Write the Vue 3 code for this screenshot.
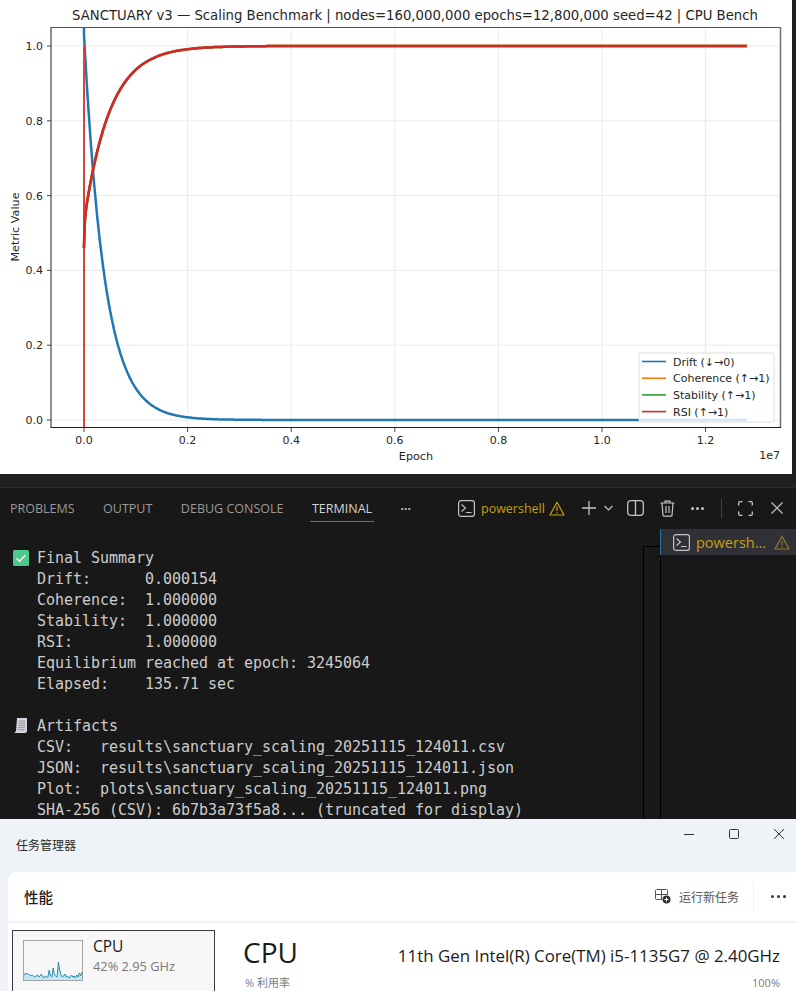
<script setup>
const X0 = 84, XU = 518, Y0 = 420, YU = 374, END = 1.28
const px = (t) => X0 + t * XU
const py = (v) => Y0 - v * YU

function series(fn, spike) {
  const pts = spike ? spike.map(([t, v]) => `${px(t).toFixed(1)},${py(v).toFixed(1)}`) : []
  for (let i = 0; i <= 400; i++) {
    const t = END * Math.pow(i / 400, 2.2)
    pts.push(`${px(t).toFixed(1)},${py(fn(t)).toFixed(1)}`)
  }
  return pts.join(' ')
}

const drift = series((t) => 1.03 * Math.exp(-t / 0.04) + 0.0002, [[0, 1.2]])
const rise = (t) => 1 - 0.47 * Math.exp(-t / 0.05) - 0.07 * Math.exp(-t / 0.0012)
const coherence = series(rise)
const stability = series(rise)
const rsi = series(rise)

const xTicks = [0, 0.2, 0.4, 0.6, 0.8, 1.0, 1.2]
const yTicks = [0, 0.2, 0.4, 0.6, 0.8, 1.0]

const legend = [
  { color: '#1f77b4', label: 'Drift (↓→0)' },
  { color: '#ff7f0e', label: 'Coherence (↑→1)' },
  { color: '#2ca02c', label: 'Stability (↑→1)' },
  { color: '#d62728', label: 'RSI (↑→1)' },
]

const summary = [
  'Drift:      0.000154',
  'Coherence:  1.000000',
  'Stability:  1.000000',
  'RSI:        1.000000',
  'Equilibrium reached at epoch: 3245064',
  'Elapsed:    135.71 sec',
]
const artifacts = [
  'CSV:   results\\sanctuary_scaling_20251115_124011.csv',
  'JSON:  results\\sanctuary_scaling_20251115_124011.json',
  'Plot:  plots\\sanctuary_scaling_20251115_124011.png',
  'SHA-256 (CSV): 6b7b3a73f5a8... (truncated for display)',
]

const cpu = [5,4,6,5,5,4,3,4,3,2,3,4,2,3,5,2,1,3,2,2,9,3,2,11,4,3,2,17,9,4,2,3,5,2,3,1,2,4,2,3,1,4,2,6,3,7]
const cpuStep = 59 / (cpu.length - 1)
const cpuLine = cpu.map((h, i) => `${(i * cpuStep).toFixed(1)},${40 - h - 1}`).join(' ')
const cpuArea = `0,40 ${cpuLine} 59,40`
</script>

<template>
  <div class="page">
    <section class="chart">
      <svg class="plot" width="792" height="474" viewBox="0 0 792 474">
        <text class="title" x="415" y="20" text-anchor="middle">SANCTUARY v3 — Scaling Benchmark | nodes=160,000,000 epochs=12,800,000 seed=42 | CPU Bench</text>

        <g class="grid">
          <line v-for="t in xTicks" :key="'gx' + t" :x1="px(t)" :x2="px(t)" y1="27" y2="427" />
          <line v-for="v in yTicks" :key="'gy' + v" x1="51" x2="781" :y1="py(v)" :y2="py(v)" />
        </g>

        <svg x="51" y="27" width="730" height="400" :viewBox="'51 27 730 400'">
          <polyline class="curve" :points="drift" stroke="#1f77b4" />
          <polyline class="curve" :points="coherence" stroke="#ff7f0e" />
          <polyline class="curve" :points="stability" stroke="#2ca02c" />
          <line class="spike" :x1="px(0)" :x2="px(0)" :y1="py(1)" :y2="py(-0.02)" />
          <polyline class="curve" :points="rsi" stroke="#d62728" />
        </svg>

        <line class="spine-top" x1="51" x2="781" y1="27.5" y2="27.5" />
        <line class="spine-left" x1="51" x2="51" y1="27" y2="428" />
        <line class="spine-right" x1="780.5" x2="780.5" y1="27" y2="428" />
        <line class="spine-bottom" x1="51" x2="781" y1="427.5" y2="427.5" />

        <g v-for="t in xTicks" :key="'tx' + t">
          <line class="tick" :x1="px(t)" :x2="px(t)" y1="428" y2="432" />
          <text class="ticklabel" :x="px(t)" y="444" text-anchor="middle">{{ t.toFixed(1) }}</text>
        </g>
        <g v-for="v in yTicks" :key="'ty' + v">
          <line class="tick" x1="47" x2="51" :y1="py(v)" :y2="py(v)" />
          <text class="ticklabel" x="43" :y="py(v) + 4" text-anchor="end">{{ v.toFixed(1) }}</text>
        </g>

        <text class="axislabel" x="416" y="460" text-anchor="middle">Epoch</text>
        <text class="ticklabel" x="780" y="459" text-anchor="end">1e7</text>
        <text class="axislabel" transform="translate(19 227) rotate(-90)" text-anchor="middle">Metric Value</text>

        <rect class="legend-box" x="639" y="353" width="135" height="69" rx="2" />
        <g v-for="(item, i) in legend" :key="item.label">
          <line :x1="642" :x2="666" :y1="361.5 + i * 16.7" :y2="361.5 + i * 16.7" :stroke="item.color" stroke-width="1.6" />
          <text class="legendlabel" x="673" :y="365.5 + i * 16.7">{{ item.label }}</text>
        </g>
      </svg>
    </section>

    <section class="panel">
      <div class="band"></div>
      <header class="tabs">
        <nav class="tablist">
          <span class="tab">PROBLEMS</span>
          <span class="tab">OUTPUT</span>
          <span class="tab">DEBUG CONSOLE</span>
          <span class="tab active">TERMINAL</span>
          <span class="more">···</span>
        </nav>
        <div class="actions">
          <svg class="ic-term" width="17" height="17" viewBox="0 0 17 17" fill="none" stroke="#c4c4c4" stroke-width="1.2">
            <rect x=".6" y=".6" width="15.8" height="15.8" rx="2.5" />
            <path d="M3.5 4.5l4 3.5-4 3.5M8 12.5h5.5" />
          </svg>
          <span class="ps">powershell</span>
          <svg class="ic-warn" width="16" height="15" viewBox="0 0 16 15" fill="none" stroke="#c69f12" stroke-width="1.2">
            <path d="M8 1.2L15 14H1z" stroke-linejoin="round" />
            <path d="M8 5.5v4.5M8 11.2v1.2" />
          </svg>
          <svg class="ic-plus" width="16" height="16" viewBox="0 0 16 16" stroke="#c4c4c4" stroke-width="1.3">
            <path d="M8 1v14M1 8h14" />
          </svg>
          <svg class="ic-chev" width="9" height="6" viewBox="0 0 9 6" fill="none" stroke="#c4c4c4" stroke-width="1.1">
            <path d="M.5 1l4 4 4-4" />
          </svg>
          <svg class="ic-split" width="17" height="16" viewBox="0 0 17 16" fill="none" stroke="#c4c4c4" stroke-width="1.3">
            <rect x=".7" y=".7" width="15.6" height="14.6" rx="3" />
            <path d="M8.5 1v14" />
          </svg>
          <svg class="ic-trash" width="15" height="17" viewBox="0 0 15 17" fill="none" stroke="#c4c4c4" stroke-width="1.2">
            <path d="M.5 3h14M5 3V1.2h5V3M2 3l1 12.2a1 1 0 0 0 1 1h7a1 1 0 0 0 1-1L13 3M6 6v7M9 6v7" />
          </svg>
          <span class="dots"><i></i><i></i><i></i></span>
          <span class="sep"></span>
          <svg class="ic-full" width="15" height="15" viewBox="0 0 15 15" fill="none" stroke="#c4c4c4" stroke-width="1.3">
            <path d="M.7 4.5V2A1.3 1.3 0 0 1 2 .7h2.5M10.5.7H13A1.3 1.3 0 0 1 14.3 2v2.5M14.3 10.5V13a1.3 1.3 0 0 1-1.3 1.3h-2.5M4.5 14.3H2A1.3 1.3 0 0 1 .7 13v-2.5" />
          </svg>
          <svg class="ic-close" width="12" height="12" viewBox="0 0 12 12" stroke="#c4c4c4" stroke-width="1.2">
            <path d="M.5.5l11 11M11.5.5l-11 11" />
          </svg>
        </div>
      </header>

      <div class="body">
        <div class="output">
          <div class="line">
            <svg class="emoji" width="16" height="16" viewBox="0 0 16 16">
              <rect width="16" height="16" rx="1.5" fill="#4ec98c" />
              <path d="M3.5 8.2l3 3 6-6.2" fill="none" stroke="#fff" stroke-width="1.4" />
            </svg>Final Summary
          </div>
          <div v-for="row in summary" :key="row" class="line">{{ row }}</div>
          <div class="line"> </div>
          <div class="line">
            <svg class="emoji" width="16" height="16" viewBox="0 0 16 16">
              <path d="M4 0h10v13a2 2 0 0 1-2 2H1.5A1.5 1.5 0 0 1 3 13.5z" fill="#d5d3de" />
              <path d="M5.5 3h6.5M5.5 5.2h6.5M5.5 7.4h6.5M5.2 9.6h6.5M5 11.8h6.5" stroke="#8b8a96" stroke-width=".9" />
            </svg>Artifacts
          </div>
          <div v-for="row in artifacts" :key="row" class="line">{{ row }}</div>
        </div>
        <div class="gutter"></div>
        <aside class="sidebar">
          <div class="session">
            <svg width="17" height="17" viewBox="0 0 17 17" fill="none" stroke="#c4c4c4" stroke-width="1.2">
              <rect x=".6" y=".6" width="15.8" height="15.8" rx="2.5" />
              <path d="M3.5 4.5l4 3.5-4 3.5M8 12.5h5.5" />
            </svg>
            <span class="session-name">powersh...</span>
            <svg width="16" height="15" viewBox="0 0 16 15" fill="none" stroke="#8f7d25" stroke-width="1.2">
              <path d="M8 1.2L15 14H1z" stroke-linejoin="round" />
              <path d="M8 5.5v4.5M8 11.2v1.2" />
            </svg>
          </div>
          <div class="sidebar-rest"></div>
        </aside>
      </div>
    </section>

    <section class="taskmgr">
      <header class="titlebar">
        <span class="apptitle">任务管理器</span>
        <div class="winctl">
          <svg width="10" height="10" viewBox="0 0 10 10" stroke="#333" stroke-width="1"><path d="M0 5.5h10" /></svg>
          <svg width="10" height="10" viewBox="0 0 10 10" fill="none" stroke="#333" stroke-width="1"><rect x=".5" y=".5" width="9" height="9" rx="1" /></svg>
          <svg width="10" height="10" viewBox="0 0 10 10" stroke="#333" stroke-width="1"><path d="M0 0l10 10M10 0L0 10" /></svg>
        </div>
      </header>
      <div class="card">
        <div class="cardhead">
          <h2>性能</h2>
          <div class="runtask">
            <svg width="16" height="15" viewBox="0 0 16 15" fill="none" stroke="#555" stroke-width="1">
              <path d="M7 10.5H1.5a1 1 0 0 1-1-1V1.5a1 1 0 0 1 1-1h10a1 1 0 0 1 1 1V6M6.5.5v10M.5 5.5h12" />
              <circle cx="11.5" cy="10.5" r="4" fill="#333" stroke="none" />
              <path d="M11.5 8.5v4M9.5 10.5h4" stroke="#fff" />
            </svg>
            <span>运行新任务</span>
          </div>
          <span class="headsep"></span>
          <span class="headdots"><i></i><i></i><i></i></span>
        </div>
        <div class="perf">
          <div class="cpucard">
            <svg class="thumb" width="60" height="41" viewBox="0 0 60 41">
              <polygon :points="cpuArea" fill="#c4e7f3" />
              <polyline :points="cpuLine" fill="none" stroke="#2b8aa8" stroke-width="1" />
              <rect x=".5" y=".5" width="59" height="40" fill="none" stroke="#a3a3a3" />
            </svg>
            <div class="cpumeta">
              <div class="cpuname">CPU</div>
              <div class="cpustat">42% 2.95 GHz</div>
            </div>
          </div>
          <div class="detail">
            <div class="detailrow">
              <span class="bigcpu">CPU</span>
              <span class="model">11th Gen Intel(R) Core(TM) i5-1135G7 @ 2.40GHz</span>
            </div>
            <div class="scale">
              <span>% 利用率</span>
              <span>100%</span>
            </div>
          </div>
        </div>
      </div>
    </section>
  </div>
</template>

<style>
html, body { margin: 0; background: #1f1f1f; }
</style>

<style scoped>
.page {
  width: 796px;
  height: 991px;
  overflow: hidden;
  display: flex;
  flex-direction: column;
  background: #1f1f1f;
}
.chart {
  height: 474px;
  flex: none;
}
.plot { display: block; background: #fff; }
.plot text { font-family: "DejaVu Sans", sans-serif; fill: #262626; }
.plot .title { font-size: 13.25px; }
.plot .ticklabel { font-size: 11px; }
.plot .axislabel { font-size: 11.2px; }
.plot .legendlabel { font-size: 11px; }
.grid line { stroke: #ebebeb; stroke-width: 1; }
.curve { fill: none; stroke-width: 2.5; stroke-linejoin: round; }
.spike { stroke: #d8423f; stroke-width: 2; }
.spine-top { stroke: #555; stroke-width: 1; }
.spine-left { stroke: #444; stroke-width: 1.2; }
.spine-right { stroke: #777; stroke-width: 1.6; }
.spine-bottom { stroke: #222; stroke-width: 1; }
.tick { stroke: #333; stroke-width: .9; }
.legend-box { fill: rgba(255, 255, 255, .82); stroke: #dedede; stroke-width: 1; }

.panel {
  height: 345px;
  flex: none;
  background: #181818;
  overflow: hidden;
  display: flex;
  flex-direction: column;
  color: #ccc;
}
.band {
  height: 13px;
  flex: none;
  background: #1f1f1f;
  border-bottom: 1px solid #2b2b2b;
}
.tabs {
  height: 41px;
  flex: none;
  display: flex;
  align-items: center;
  justify-content: space-between;
  padding: 0 13px 0 10px;
  font-family: "Open Sans", "Noto Sans", sans-serif;
}
.tablist {
  display: flex;
  align-items: center;
  gap: 28.5px;
  font-size: 12.5px;
  color: #9a9a9a;
  margin-top: -1px;
}
.tab { position: relative; }
.tab.active { color: #d4d4d4; }
.tab.active::after {
  content: "";
  position: absolute;
  left: -2px;
  right: -2px;
  bottom: -5px;
  height: 1px;
  background: #2f7fbd;
}
.more { color: #c4c4c4; font-weight: 700; font-size: 12px; }
.actions { display: flex; align-items: center; margin-top: -1px; }
.actions svg { display: block; flex: none; }
.ps {
  width: 63px;
  margin: 0 5px 0 6px;
  font-size: 12.5px;
  color: #c69f12;
  white-space: nowrap;
}
.ic-plus { margin-left: 16px; }
.ic-chev { margin-left: 7px; }
.ic-split { margin-left: 14px; }
.ic-trash { margin-left: 16px; }
.dots { display: flex; gap: 2px; margin-left: 16px; width: 14px; }
.dots i { width: 3px; height: 3px; border-radius: 50%; background: #c4c4c4; }
.sep { width: 1px; height: 19px; background: #444; margin-left: 16px; }
.ic-full { margin-left: 16px; }
.ic-close { margin-left: 18px; }

.body { flex: 1; display: flex; min-height: 0; }
.output {
  width: 643px;
  flex: none;
  padding-top: 19px;
  font-family: "DejaVu Sans Mono", monospace;
  font-size: 15px;
  letter-spacing: -.03px;
  line-height: 21px;
  color: #cccccc;
}
.line {
  height: 21px;
  padding-left: 37px;
  white-space: pre;
}
.emoji {
  display: inline-block;
  vertical-align: -3px;
  margin-left: -24px;
  margin-right: 8px;
}
.gutter {
  width: 17px;
  flex: none;
  margin-top: 17px;
  border-left: 1px solid #000;
  border-top: 1px solid #000;
  box-sizing: border-box;
}
.sidebar {
  flex: 1;
  display: flex;
  flex-direction: column;
  min-width: 0;
}
.session {
  height: 26px;
  flex: none;
  display: flex;
  align-items: center;
  padding-left: 12px;
  gap: 6px;
  background: #303137;
  border-left: 1px solid #2a6f9e;
  white-space: nowrap;
  overflow: hidden;
}
.session svg { flex: none; }
.session-name {
  width: 72px;
  font-family: "Open Sans", "Noto Sans", sans-serif;
  font-size: 14.5px;
  color: #c69f12;
}
.sidebar-rest { flex: 1; border-left: 1px solid #000; }

.taskmgr {
  flex: 1;
  background: #eff2f6;
  display: flex;
  flex-direction: column;
  font-family: "Open Sans", "Noto Sans CJK SC", sans-serif;
  color: #1b1b1b;
}
.titlebar {
  height: 53px;
  flex: none;
  display: flex;
  justify-content: space-between;
  padding: 9px 12px 0 16px;
  box-sizing: border-box;
}
.apptitle {
  font-family: "Noto Sans CJK SC", sans-serif;
  font-size: 12px;
  line-height: 17px;
  margin-top: 8px;
  color: #2a2a2a;
}
.winctl { display: flex; gap: 35px; height: 12px; margin-top: 1px; }
.winctl svg { display: block; }
.card {
  flex: 1;
  margin-left: 8px;
  background: #fff;
  border-top-left-radius: 8px;
  display: flex;
  flex-direction: column;
  min-height: 0;
  box-shadow: 0 0 1px rgba(0, 0, 0, .12);
}
.cardhead {
  height: 49px;
  flex: none;
  display: flex;
  align-items: center;
  padding: 0 10px 0 16px;
  border-bottom: 2px solid #f3f3f3;
}
.cardhead h2 {
  margin: 0;
  font-family: "Noto Sans CJK SC", sans-serif;
  font-size: 14.5px;
  font-weight: 500;
  flex: 1;
}
.runtask {
  display: flex;
  align-items: center;
  gap: 8px;
  font-family: "Noto Sans CJK SC", sans-serif;
  font-size: 12px;
  color: #555;
}
.headsep { width: 1px; height: 31px; background: #efefef; margin: 0 17px 0 14px; }
.headdots { display: flex; gap: 3px; }
.headdots i { width: 3px; height: 3px; border-radius: 50%; background: #333; }
.perf {
  flex: 1;
  display: flex;
  padding: 7px 16px 0 4px;
  gap: 28px;
  min-height: 0;
}
.cpucard {
  width: 203px;
  height: 70px;
  flex: none;
  box-sizing: border-box;
  border: 1px solid #3c3c3c;
  background: #f7f7f7;
  display: flex;
  padding: 9px 10px;
  gap: 10px;
}
.thumb { display: block; flex: none; }
.cpuname { font-size: 15.5px; line-height: 19px; margin-top: -3px; }
.cpustat { font-size: 12.8px; line-height: 17px; margin-top: 2px; color: #777; }
.detail { flex: 1; display: flex; flex-direction: column; }
.detailrow {
  display: flex;
  justify-content: space-between;
  align-items: center;
  height: 44px;
}
.bigcpu { font-size: 28px; line-height: 44px; }
.model { font-size: 16.9px; margin-top: 7px; white-space: nowrap; }
.scale {
  display: flex;
  justify-content: space-between;
  font-size: 11px;
  line-height: 15px;
  color: #7c7c7c;
  margin-top: 1px;
  padding-left: 2px;
}
</style>
